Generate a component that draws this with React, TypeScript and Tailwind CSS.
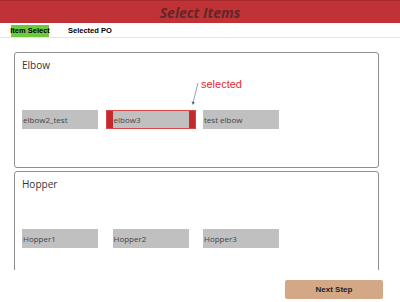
const items = {
    elbow: ["elbow2_test", "elbow3", "test elbow"],
    hopper: ["Hopper1", "Hopper2", "Hopper3"],
}

function Item({ label, selected }: { label: string; selected?: boolean }) {
    if (selected) {
        return (
            <div className="-mx-[7px] flex h-[19px] border border-[#d9474b]">
                <div className="w-[6px] bg-[#c4292e]" />
                <div className="flex w-[76px] items-center bg-[#c0c0c0] pl-[1px] text-[8px] text-[#444]">{label}</div>
                <div className="w-[6px] bg-[#c4292e]" />
            </div>
        )
    }
    return (
        <div className="flex h-[19px] w-[76px] items-center bg-[#c0c0c0] pl-[1px] text-[8px] text-[#444]">{label}</div>
    )
}

function Panel({ title, list, selectedIndex, children }: { title: string; list: string[]; selectedIndex?: number; children?: React.ReactNode }) {
    return (
        <section className="relative h-[116px] shrink-0 rounded-[3px] border border-[#8e8e8e] px-[7px] pt-[5px]">
            <div className="text-[10px] leading-[14px] text-[#333]">{title}</div>
            <div className="mt-[38px] flex gap-[14.5px]">
                {list.map((l, i) => (
                    <Item key={l} label={l} selected={i === selectedIndex} />
                ))}
            </div>
            {children}
        </section>
    )
}

export default function App() {
    return (
        <div className="flex h-[302px] w-[400px] flex-col bg-white" style={{ fontFamily: '"Open Sans", "Noto Sans", sans-serif' }}>
            <header className="flex h-[23px] items-center justify-center border-t border-[#a8282b] bg-[#c13236]">
                <h1 className="text-[14px] font-bold italic text-[#5e2729]">Select Items</h1>
            </header>
            <nav className="flex h-[15px] items-end border-b border-[#e4e4e4] pl-[11px] text-[7.5px] font-bold text-black" style={{ fontFamily: '"Liberation Sans", Arial, sans-serif' }}>
                <div className="flex h-[12px] w-[38px] items-center justify-center whitespace-nowrap bg-[#6ccb3c]">Item Select</div>
                <div className="ml-[19px] flex h-[12px] items-center whitespace-nowrap">Selected PO</div>
            </nav>
            <main className="mt-[14px] flex h-[218px] flex-col gap-[3px] overflow-hidden px-[14px] pr-[21px]">
                <Panel title="Elbow" list={items.elbow} selectedIndex={1}>
                    <span className="absolute left-[186px] top-[23px] text-[11px] text-[#e8262c]" style={{ fontFamily: '"Liberation Sans", Arial, sans-serif' }}>
                        selected
                    </span>
                    <svg className="absolute left-[174px] top-[29px]" width="12" height="24" viewBox="0 0 12 24">
                        <line x1="9" y1="1" x2="4" y2="21" stroke="#7a8db0" strokeWidth="0.8" />
                        <path d="M2.5 19.5 L4 23 L5.8 20.3 Z" fill="#4b5f8e" />
                    </svg>
                </Panel>
                <Panel title="Hopper" list={items.hopper} />
            </main>
            <div className="mt-[10px] flex justify-end pr-[17px]">
                <button className="h-[19px] w-[98px] rounded-[2px] bg-[#d4a886] text-[8px] font-bold text-[#222]" style={{ fontFamily: '"Liberation Sans", Arial, sans-serif' }}>
                    Next Step
                </button>
            </div>
        </div>
    )
}
